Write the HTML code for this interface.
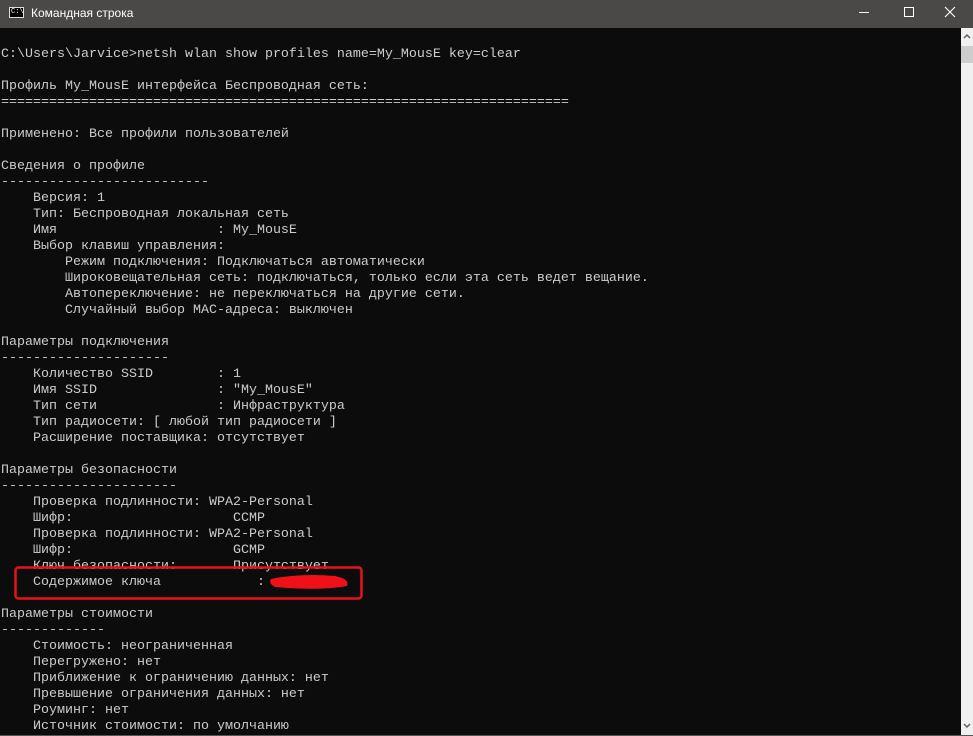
<!DOCTYPE html>
<html><head><meta charset="utf-8"><style>
html,body{margin:0;padding:0;}
body{width:973px;height:736px;background:#0c0c0c;position:relative;overflow:hidden;font-family:"Liberation Sans","Noto Sans CJK SC",sans-serif;}
.title{position:absolute;left:0;top:0;width:973px;height:28px;background:#4a4948;color:#fff;font-size:12px;}
.title .t{position:absolute;left:31px;top:6px;}
.icon{position:absolute;left:9px;top:7px;width:15px;height:11px;background:#000;border:1px solid #ddd;box-sizing:border-box;}
.icon span{position:absolute;left:1px;top:0px;font:7px "Liberation Mono",monospace;color:#fff;}
pre{position:absolute;left:1px;top:47px;margin:0;font-family:"Liberation Mono","Noto Sans CJK SC",monospace;font-size:13.33px;line-height:16px;color:#cccccc;}
.sb{position:absolute;left:961px;top:28px;width:12px;height:707px;background:#f0f0f0;}
.thumb{position:absolute;left:961px;top:46px;width:12px;height:17px;background:#cdcdcd;}
.bot{position:absolute;left:0;top:735px;width:973px;height:1px;background:#555;}
</style></head><body>
<div class="title"><div class="icon"><span>C:\</span></div><div class="t">Командная строка</div>
<svg style="position:absolute;left:855px;top:5px" width="110" height="16"><line x1="4" y1="7.5" x2="14" y2="7.5" stroke="#fff"/><rect x="49.5" y="2.5" width="9" height="9" fill="none" stroke="#fff"/><path d="M90 2 L100 12 M100 2 L90 12" stroke="#fff" stroke-width="1.1"/></svg></div>
<pre>C:\Users\Jarvice&gt;netsh wlan show profiles name=My_MousE key=clear

Профиль My_MousE интерфейса Беспроводная сеть:
=======================================================================

Применено: Все профили пользователей

Сведения о профиле
--------------------------
    Версия: 1
    Тип: Беспроводная локальная сеть
    Имя                    : My_MousE
    Выбор клавиш управления:
        Режим подключения: Подключаться автоматически
        Широковещательная сеть: подключаться, только если эта сеть ведет вещание.
        Автопереключение: не переключаться на другие сети.
        Случайный выбор MAC-адреса: выключен

Параметры подключения
---------------------
    Количество SSID        : 1
    Имя SSID               : "My_MousE"
    Тип сети               : Инфраструктура
    Тип радиосети: [ любой тип радиосети ]
    Расширение поставщика: отсутствует

Параметры безопасности
----------------------
    Проверка подлинности: WPA2-Personal
    Шифр:                    CCMP
    Проверка подлинности: WPA2-Personal
    Шифр:                    GCMP
    Ключ безопасности:       Присутствует
    Содержимое ключа            : 

Параметры стоимости
-------------
    Стоимость: неограниченная
    Перегружено: нет
    Приближение к ограничению данных: нет
    Превышение ограничения данных: нет
    Роуминг: нет
    Источник стоимости: по умолчанию</pre>
<svg style="position:absolute;left:0;top:0" width="973" height="736">
<rect x="15.5" y="567.5" width="346" height="31" rx="3" fill="none" stroke="#e8121b" stroke-width="2.5"/>
<path d="M271 579 Q300 573 335 576 Q350 579 347 586 Q320 591 275 587 Q268 583 271 579Z" fill="#f0101a"/>
</svg>
<div class="sb"></div><div class="thumb"></div>
<svg style="position:absolute;left:961px;top:30px" width="12" height="12"><path d="M3 8 L6 5 L9 8" stroke="#606060" stroke-width="1.5" fill="none"/></svg>
<svg style="position:absolute;left:961px;top:720px" width="12" height="12"><path d="M3 4 L6 7 L9 4" stroke="#606060" stroke-width="1.5" fill="none"/></svg>
<div class="bot"></div>
</body></html>
